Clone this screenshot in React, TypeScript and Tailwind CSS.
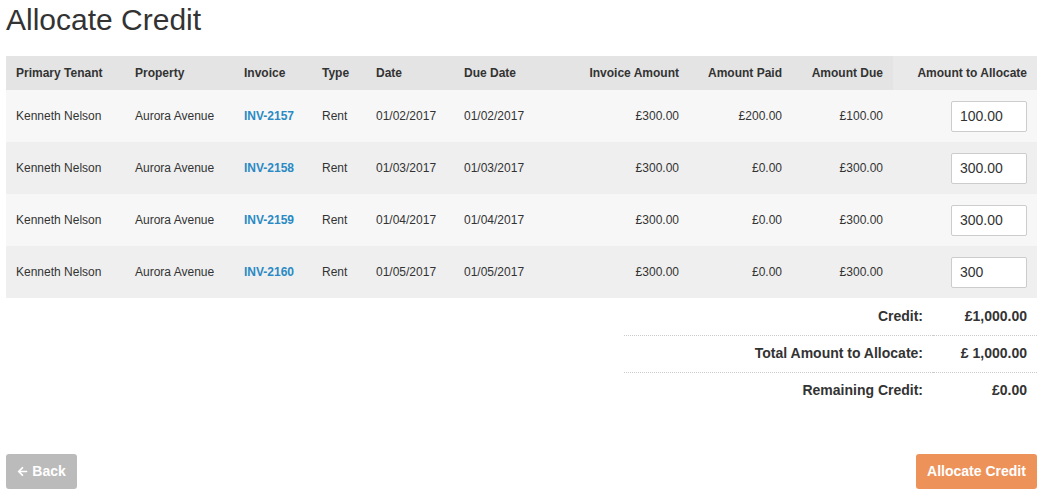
import React, { useState } from "react";
import { FaArrowLeft } from "react-icons/fa";

type Row = {
  tenant: string;
  property: string;
  invoice: string;
  type: string;
  date: string;
  due: string;
  amount: string;
  paid: string;
  amountDue: string;
  allocate: string;
};

const rows: Row[] = [
  { tenant: "Kenneth Nelson", property: "Aurora Avenue", invoice: "INV-2157", type: "Rent", date: "01/02/2017", due: "01/02/2017", amount: "£300.00", paid: "£200.00", amountDue: "£100.00", allocate: "100.00" },
  { tenant: "Kenneth Nelson", property: "Aurora Avenue", invoice: "INV-2158", type: "Rent", date: "01/03/2017", due: "01/03/2017", amount: "£300.00", paid: "£0.00", amountDue: "£300.00", allocate: "300.00" },
  { tenant: "Kenneth Nelson", property: "Aurora Avenue", invoice: "INV-2159", type: "Rent", date: "01/04/2017", due: "01/04/2017", amount: "£300.00", paid: "£0.00", amountDue: "£300.00", allocate: "300.00" },
  { tenant: "Kenneth Nelson", property: "Aurora Avenue", invoice: "INV-2160", type: "Rent", date: "01/05/2017", due: "01/05/2017", amount: "£300.00", paid: "£0.00", amountDue: "£300.00", allocate: "300" },
];

const widths = [119, 109, 78, 54, 88, 106, 129, 103, 101, 144];

const App = () => {
  const [values, setValues] = useState(rows.map((r) => r.allocate));

  return (
    <div className="px-[6px] text-[#333] font-['Liberation_Sans',Arial,sans-serif]">
      <h1 className="text-[30px] leading-[38px] pt-[1px] mb-[17px]">Allocate Credit</h1>

      <table className="table-fixed w-full border-collapse text-[12px]">
        <colgroup>
          {widths.map((w, i) => (
            <col key={i} style={{ width: w }} />
          ))}
        </colgroup>
        <thead>
          <tr className="h-[34px] bg-[#e4e4e4] font-bold">
            <th className="px-[10px] text-left">Primary Tenant</th>
            <th className="px-[10px] text-left">Property</th>
            <th className="px-[10px] text-left">Invoice</th>
            <th className="px-[10px] text-left">Type</th>
            <th className="px-[10px] text-left">Date</th>
            <th className="px-[10px] text-left">Due Date</th>
            <th className="px-[10px] text-right">Invoice Amount</th>
            <th className="px-[10px] text-right">Amount Paid</th>
            <th className="px-[10px] text-right">Amount Due</th>
            <th className="px-[10px] text-right bg-[#e9e9e9]">Amount to Allocate</th>
          </tr>
        </thead>
        <tbody>
          {rows.map((r, i) => (
            <tr key={r.invoice} className={`h-[52px] ${i % 2 === 0 ? "bg-[#f7f7f7]" : "bg-[#efefef]"}`}>
              <td className="px-[10px]">{r.tenant}</td>
              <td className="px-[10px]">{r.property}</td>
              <td className="px-[10px] font-bold text-[#2a8ac4]">{r.invoice}</td>
              <td className="px-[10px]">{r.type}</td>
              <td className="px-[10px]">{r.date}</td>
              <td className="px-[10px]">{r.due}</td>
              <td className="px-[10px] text-right">{r.amount}</td>
              <td className="px-[10px] text-right">{r.paid}</td>
              <td className="px-[10px] text-right">{r.amountDue}</td>
              <td className="px-[10px] text-right">
                <input
                  type="text"
                  value={values[i]}
                  onChange={(e) => setValues(values.map((v, j) => (j === i ? e.target.value : v)))}
                  className="w-[76px] h-[31px] bg-white border border-[#ccc] rounded-[2px] px-[8px] text-[14px] text-[#333] outline-none"
                />
              </td>
            </tr>
          ))}
        </tbody>
      </table>

      <div className="flex justify-end">
        <table className="w-[413px] border-collapse text-[14px] font-bold">
          <tbody>
            <tr className="h-[37px] border-b border-dotted border-[#ccc]">
              <td className="px-[10px] text-right">Credit:</td>
              <td className="w-[104px] px-[10px] text-right">£1,000.00</td>
            </tr>
            <tr className="h-[37px] border-b border-dotted border-[#ccc]">
              <td className="px-[10px] text-right">Total Amount to Allocate:</td>
              <td className="px-[10px] text-right">£ 1,000.00</td>
            </tr>
            <tr className="h-[37px]">
              <td className="px-[10px] text-right">Remaining Credit:</td>
              <td className="px-[10px] text-right">£0.00</td>
            </tr>
          </tbody>
        </table>
      </div>

      <div className="flex justify-between mt-[45px]">
        <button className="h-[35px] w-[71px] rounded-[3px] bg-[#bbbbbb] text-white font-bold text-[14px] flex items-center justify-center gap-[4px]">
          <FaArrowLeft className="w-[11px] h-[11px]" />
          Back
        </button>
        <button className="h-[35px] w-[121px] rounded-[3px] bg-[#ed935a] text-white font-bold text-[14px]">
          Allocate Credit
        </button>
      </div>
    </div>
  );
};

export default App;
